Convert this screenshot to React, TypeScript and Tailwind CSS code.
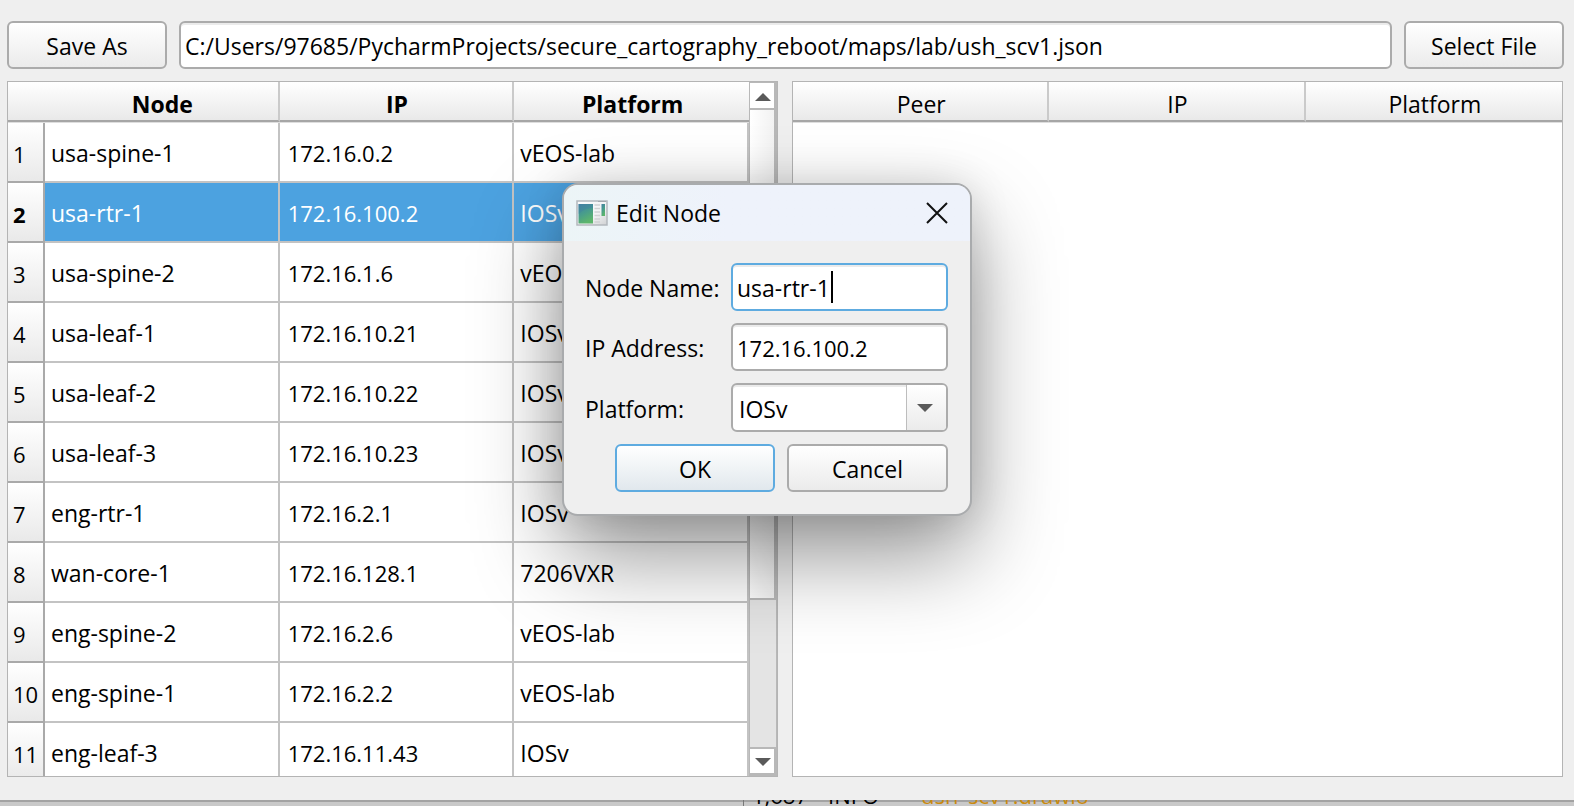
import { useState } from "react";

const nodes = [
  ["usa-spine-1", "172.16.0.2", "vEOS-lab"],
  ["usa-rtr-1", "172.16.100.2", "IOSv"],
  ["usa-spine-2", "172.16.1.6", "vEOS-lab"],
  ["usa-leaf-1", "172.16.10.21", "IOSv"],
  ["usa-leaf-2", "172.16.10.22", "IOSv"],
  ["usa-leaf-3", "172.16.10.23", "IOSv"],
  ["eng-rtr-1", "172.16.2.1", "IOSv"],
  ["wan-core-1", "172.16.128.1", "7206VXR"],
  ["eng-spine-2", "172.16.2.6", "vEOS-lab"],
  ["eng-spine-1", "172.16.2.2", "vEOS-lab"],
  ["eng-leaf-3", "172.16.11.43", "IOSv"],
];

const button = "h-12 rounded-md border-2 bg-linear-to-b pt-0.5 text-center";
const plain = "border-[#ababab] from-white to-[#ebebeb]";
const field =
  "h-12 min-w-0 rounded-md border-2 bg-white px-1 pt-0.5 outline-none shadow-[inset_0_2px_0_#ebebeb]";
const headCell = "bg-[#dedede] p-0 pb-px";
const headFace =
  "h-10 border-b-2 border-b-[#a6a6a6] bg-linear-to-b from-white to-[#e9e9e9] pt-1.5 pl-0.5 text-center";

function Arrow({ up = false }: { up?: boolean }) {
  return (
    <svg width="16" height="8" viewBox="0 0 16 8" aria-hidden="true">
      <path d={up ? "M0 8 8 0l8 8z" : "M0 0h16L8 8z"} fill="#5a5a5a" />
    </svg>
  );
}

function AppIcon() {
  return (
    <svg width="32" height="26" viewBox="0 0 32 26" aria-hidden="true">
      <defs>
        <linearGradient id="screen" x1="0" y1="0" x2="0.4" y2="1">
          <stop offset="0" stopColor="#4480a0" />
          <stop offset="0.5" stopColor="#479b8e" />
          <stop offset="1" stopColor="#5cb56c" />
        </linearGradient>
        <linearGradient id="frame" x1="0" y1="0" x2="1" y2="1">
          <stop offset="0" stopColor="#fbfcfd" />
          <stop offset="0.6" stopColor="#f2f3f4" />
          <stop offset="1" stopColor="#cfd1d3" />
        </linearGradient>
      </defs>
      <rect x="1" y="1" width="30" height="24" fill="url(#frame)" stroke="#b3b8bd" strokeWidth="1.500" />
      <path d="M22 1.500h8" stroke="#a4a9ae" />
      <rect x="2.500" y="4" width="14.500" height="19.500" fill="url(#screen)" />
      <path d="M2.500 14Q8 8 17 8V4H2.500z" fill="#3f7da6" opacity=".35" />
      <path
        d="M18.500 5h5.500M18.500 8.500h5.500M18.500 12h5.500M18.500 15.500h5.500M18.500 19h5.500M18.500 22h5.500"
        stroke="#d0d2d3"
        strokeWidth="1.500"
      />
      <rect x="25.500" y="4" width="3.500" height="12" fill="url(#screen)" />
    </svg>
  );
}

function HeadCell({ text, bold = false }: { text: string; bold?: boolean }) {
  return (
    <th scope="col" className={`${headCell} group ${bold ? "font-bold" : "font-normal"}`}>
      <div className={`${headFace} border-r-2 border-r-[#cacaca] group-last:border-r-0`}>{text}</div>
    </th>
  );
}

function NodeTable() {
  return (
    <section className="flex min-w-0 flex-1 overflow-hidden border border-[#b4b4b4] bg-white">
      <div className="min-w-0 flex-1 overflow-hidden">
        <table className="w-full table-fixed border-separate border-spacing-0">
          <colgroup>
            <col className="w-[37px]" />
            <col />
            <col />
            <col />
          </colgroup>
          <thead>
            <tr>
              <td className={headCell}>
                <div className={headFace} />
              </td>
              {["Node", "IP", "Platform"].map((t) => (
                <HeadCell key={t} text={t} bold />
              ))}
            </tr>
          </thead>
          <tbody>
            {nodes.map((row, i) => (
              <tr key={row[0]} className={i === 1 ? "bg-[#4ca2e0] text-white" : ""}>
                <th
                  scope="row"
                  className={`h-[60px] border-r-2 border-b-2 border-[#a9a9a9] bg-linear-to-b from-white to-[#e9e9e9] p-0 pt-1 pl-[5px] text-left text-[22px] text-black ${
                    i === 1 ? "font-bold" : "font-normal"
                  }`}
                >
                  {i + 1}
                </th>
                {row.map((cell, c) => (
                  <td
                    key={c}
                    className={`h-[60px] border-r-2 border-b-2 border-[#c3c3c3] p-0 pt-px ${
                      c === 1 ? "pl-2 text-[22px]" : "pl-1.5"
                    }`}
                  >
                    {cell}
                  </td>
                ))}
              </tr>
            ))}
          </tbody>
        </table>
      </div>
      <div className="flex w-7 flex-col border border-[#b8b8b8] bg-[#e4e4e4]">
        <button
          aria-label="Scroll up"
          className="flex h-[27px] items-center justify-center border-r-2 border-b-2 border-[#b8b8b8] bg-white pt-0.5 pl-0.5"
        >
          <Arrow up />
        </button>
        <div className="flex-1">
          <div className="h-[77%] border-r-2 border-b-2 border-[#b8b8b8] bg-linear-to-r from-white to-[#f2f2f2]" />
        </div>
        <button
          aria-label="Scroll down"
          className="flex h-7 items-center justify-center border-2 border-l-0 border-[#b8b8b8] bg-white pt-0.5 pl-0.5"
        >
          <Arrow />
        </button>
      </div>
    </section>
  );
}

function PeerTable() {
  return (
    <section className="min-w-0 flex-1 overflow-hidden border border-[#b4b4b4] bg-white">
      <table className="w-full table-fixed border-separate border-spacing-0">
        <thead>
          <tr>
            {["Peer", "IP", "Platform"].map((t) => (
              <HeadCell key={t} text={t} />
            ))}
          </tr>
        </thead>
      </table>
    </section>
  );
}

function EditDialog() {
  const [name, setName] = useState("usa-rtr-1");
  const [ip, setIp] = useState("172.16.100.2");
  return (
    <div
      role="dialog"
      aria-labelledby="dialog-title"
      className="absolute top-[183px] left-[562px] w-[410px] overflow-hidden rounded-2xl border-2 border-[#a9abad] bg-[#efefef] shadow-[0_40px_88px_rgba(0,0,0,0.42),0_0_40px_rgba(0,0,0,0.12)]"
    >
      <header className="flex h-14 items-center bg-linear-to-r from-[#ecf5f7] via-[#eef2fb] via-40% to-[#eef2fb] pr-[22px] pl-3">
        <AppIcon />
        <h2 id="dialog-title" className="flex-1 pl-2">
          Edit Node
        </h2>
        <button aria-label="Close">
          <svg width="22" height="22" viewBox="0 0 22 22" aria-hidden="true">
            <path d="M1 1l20 20M21 1 1 21" stroke="#111" strokeWidth="2" />
          </svg>
        </button>
      </header>
      <form className="flex flex-col gap-3 py-[22px] pr-[22px] pl-[21px]" onSubmit={(e) => e.preventDefault()}>
        <div className="grid grid-cols-[1fr_217px] items-center gap-y-3">
          <label htmlFor="name" className="pt-0.5">
            Node Name:
          </label>
          <div className="relative flex">
            <input
              id="name"
              value={name}
              onChange={(e) => setName(e.target.value)}
              className={`${field} w-full border-[#5eabe0]`}
            />
            <span className="absolute top-2 left-[100px] h-8 w-0.5 bg-black" />
          </div>
          <label htmlFor="ip" className="pt-0.5">
            IP Address:
          </label>
          <input
            id="ip"
            value={ip}
            onChange={(e) => setIp(e.target.value)}
            className={`${field} border-[#ababab] text-[22px]`}
          />
          <label htmlFor="platform" className="pt-0.5">
            Platform:
          </label>
          <div className="relative flex">
            <select
              id="platform"
              className="h-[49px] w-full appearance-none rounded-md border-2 border-[#ababab] bg-white px-1.5 pt-0.5 shadow-[inset_0_2px_0_#ebebeb] outline-none"
            >
              <option>IOSv</option>
              <option>vEOS-lab</option>
              <option>7206VXR</option>
            </select>
            <span className="pointer-events-none absolute inset-y-0.5 right-0.5 flex w-10 items-center justify-center rounded-r border-l border-[#bdbdbd] bg-linear-to-b from-white to-[#ebebeb] pr-1">
              <Arrow />
            </span>
          </div>
        </div>
        <div className="flex justify-end gap-3">
          <button className={`${button} w-40 border-[#5eabe0] from-white to-[#e1e8ed]`}>OK</button>
          <button className={`${button} ${plain} w-[161px]`}>Cancel</button>
        </div>
      </form>
    </div>
  );
}

export default function App() {
  return (
    <div className="relative flex h-screen flex-col overflow-hidden bg-[#c9c9c9] font-['Open_Sans','Noto_Sans',sans-serif] text-[23px] leading-8 text-black">
      <main className="flex min-h-0 flex-1 flex-col gap-3 border-b-2 border-[#a3a3a3] bg-[#efefef] pt-[21px] pr-2.5 pb-[23px] pl-[7px]">
        <div className="flex gap-3">
          <button className={`${button} ${plain} w-40`}>Save As</button>
          <input
            aria-label="File path"
            defaultValue="C:/Users/97685/PycharmProjects/secure_cartography_reboot/maps/lab/ush_scv1.json"
            className={`${field} flex-1 border-[#ababab]`}
          />
          <button className={`${button} ${plain} w-40`}>Select File</button>
        </div>
        <div className="flex min-h-0 flex-1 gap-3.5 pr-px">
          <NodeTable />
          <PeerTable />
        </div>
      </main>
      <footer className="h-1" />
      <div className="absolute bottom-0 left-[743px] flex h-1.5 items-end overflow-hidden border-l border-[#777] pl-2 text-[22px] leading-[22px] whitespace-pre">
        <span className="w-[76px]">1,687</span>
        <span className="w-[93px]">INFO</span>
        <span className="text-[#c98a10]">ush_scv1.drawio</span>
      </div>
      <EditDialog />
    </div>
  );
}
